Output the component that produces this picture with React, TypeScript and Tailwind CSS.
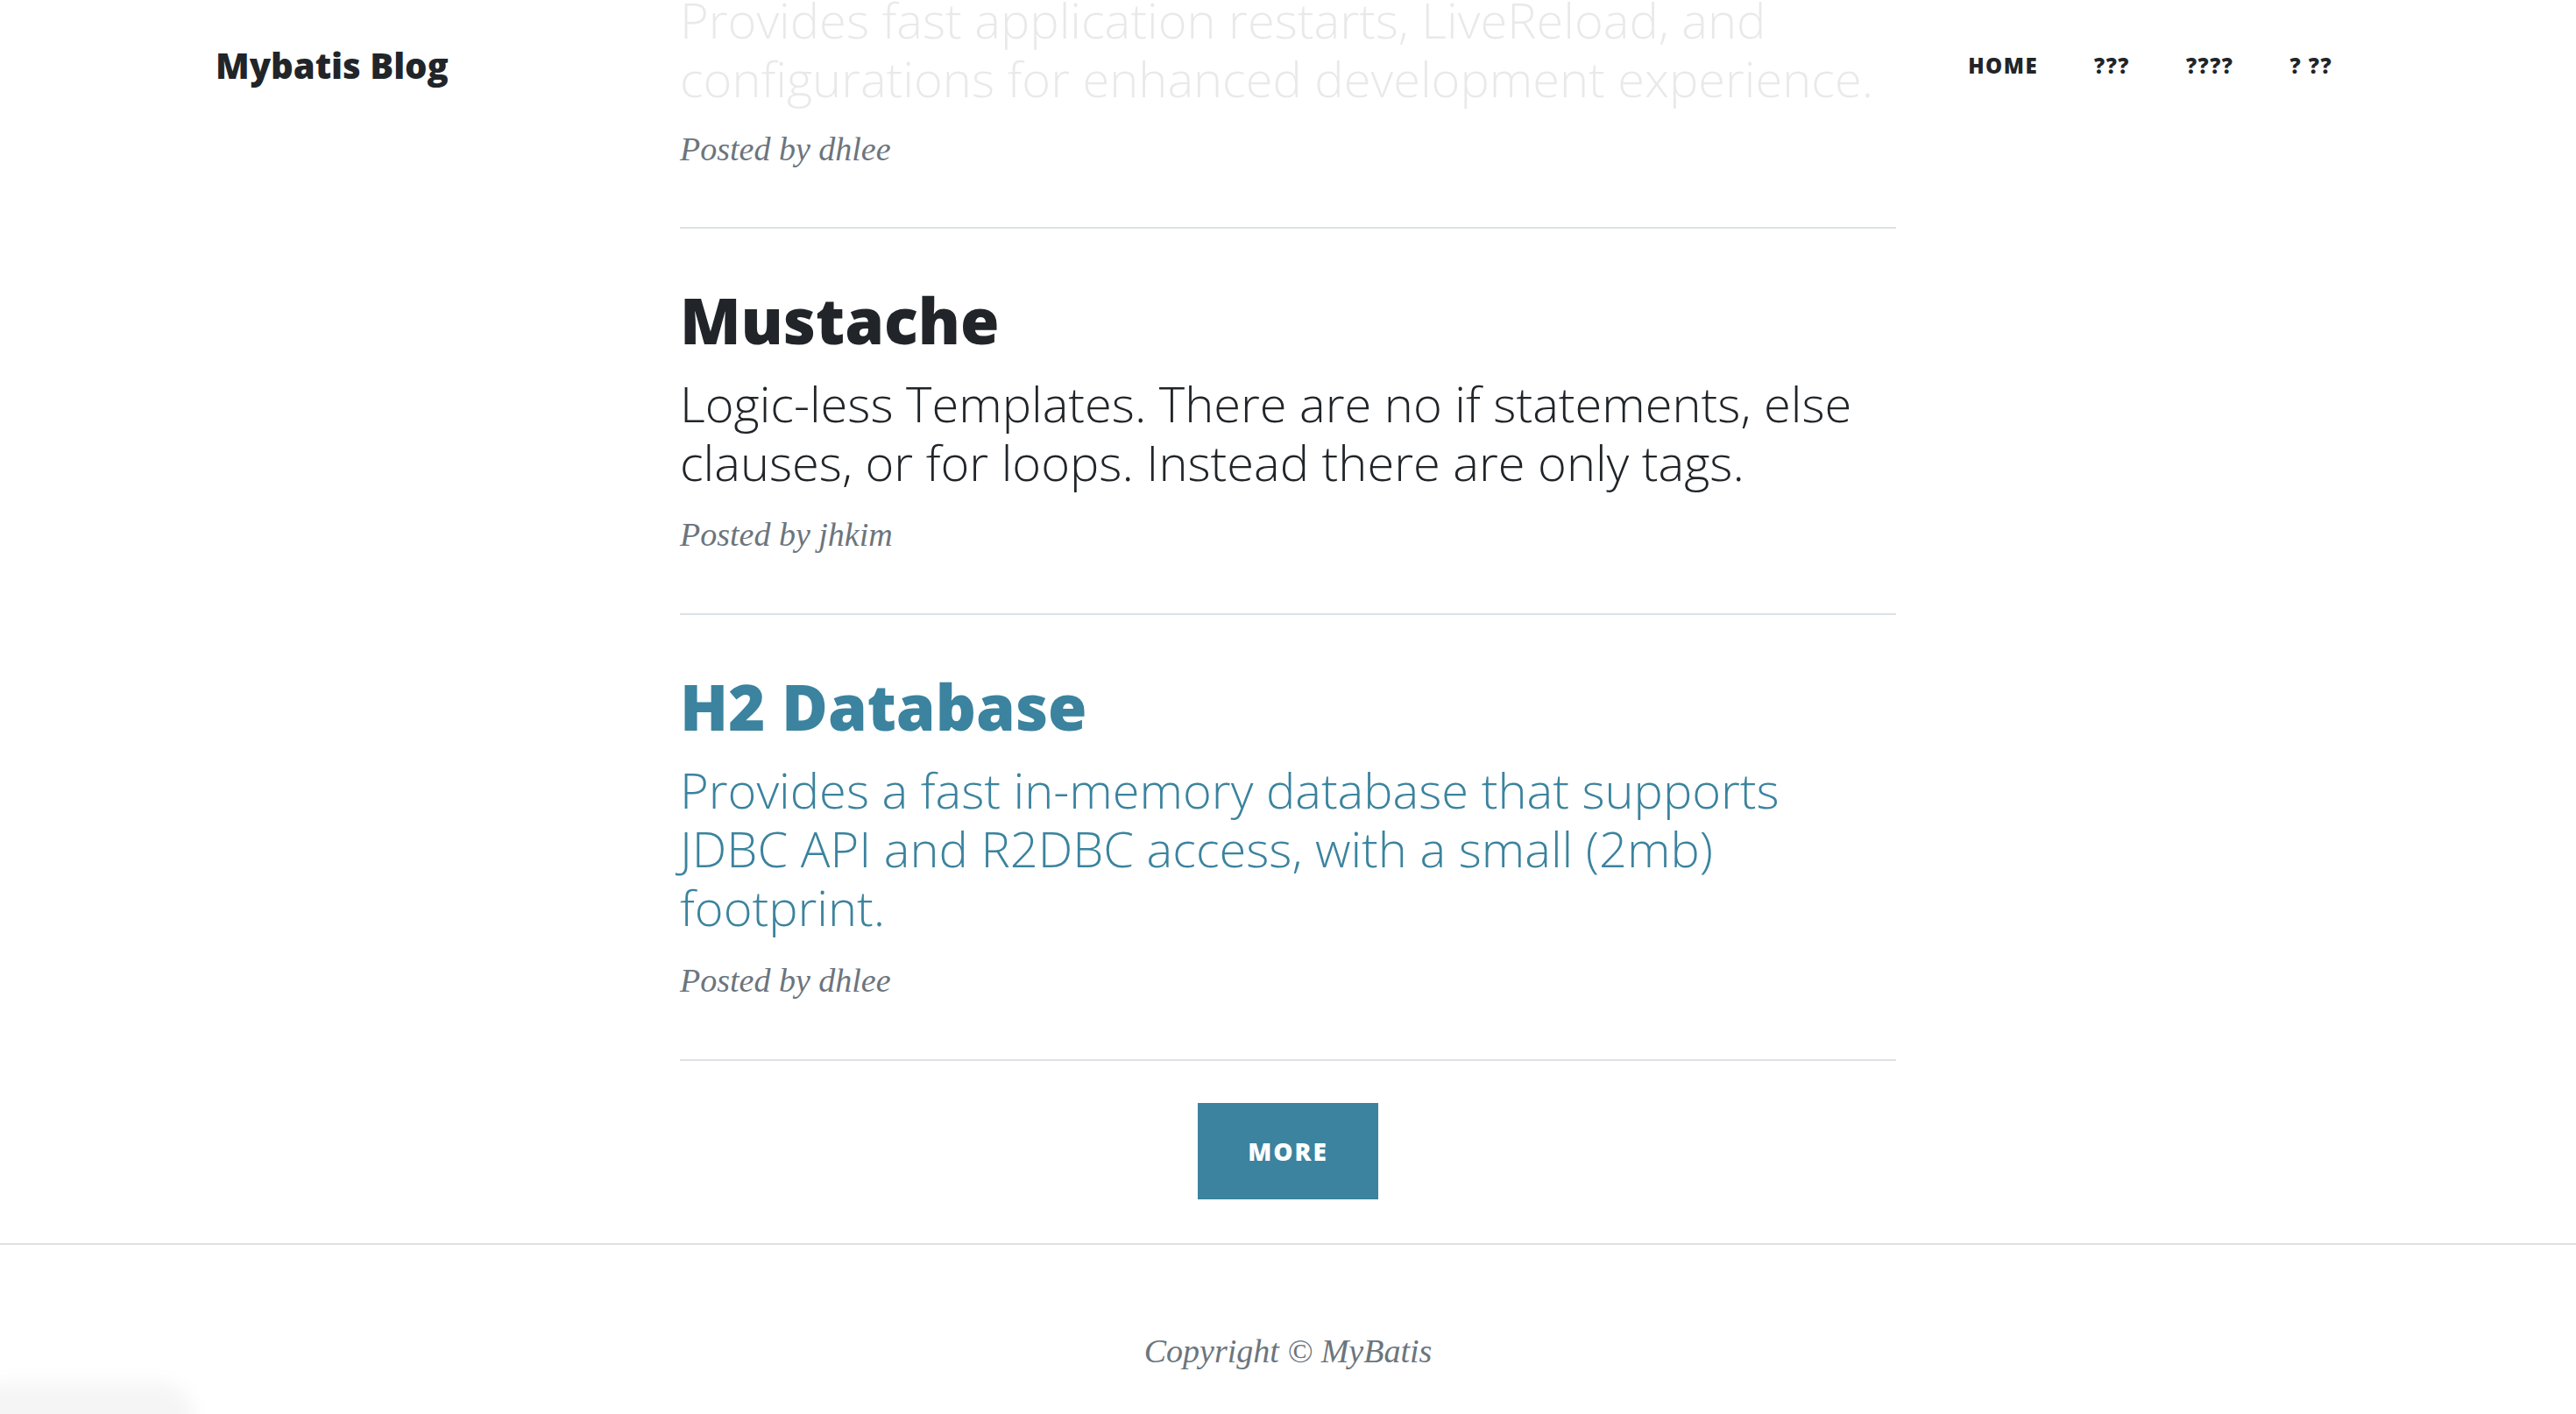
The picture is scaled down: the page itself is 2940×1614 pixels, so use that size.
import React from "react";

const navItems = ["Home", "???", "????", "? ??"];

function Meta({ author, className }: { author: string; className: string }) {
  return (
    <p className={`font-['Liberation_Serif',serif] text-[38px] italic leading-[54px] text-[#6c757d] ${className}`}>
      Posted by {author}
    </p>
  );
}

function Rule({ className }: { className: string }) {
  return <hr className={`border-0 border-t-2 border-[#dee2e6] ${className}`} />;
}

export default function App() {
  return (
    <div className="relative h-[1614px] w-full overflow-hidden bg-white font-['Open_Sans',sans-serif] text-[#212529]">
      <nav className="absolute inset-x-0 top-0 z-10 h-[156px] bg-white/90">
        <div className="flex h-[150px] items-center justify-between px-[246px]">
          <a className="text-[40px] font-extrabold leading-none text-[#212529]">Mybatis Blog</a>
          <ul className="flex">
            {navItems.map((item) => (
              <li
                key={item}
                className="px-[32px] text-[24px] font-extrabold uppercase leading-none tracking-[1.5px] text-[#212529]"
              >
                {item}
              </li>
            ))}
          </ul>
        </div>
      </nav>

      <main className="mx-auto w-[1388px]">
        <div className="-mt-[11px]">
          <p className="text-[56px] font-light leading-[67.2px]">
            Provides fast application restarts, LiveReload, and configurations for enhanced development experience.
          </p>
          <Meta author="dhlee" className="mt-[20px]" />
        </div>
        <Rule className="mt-[62px]" />

        <div>
          <h2 className="mt-[61px] text-[72px] font-extrabold leading-[86.4px]">Mustache</h2>
          <p className="mt-[18px] text-[56px] font-light leading-[67.2px]">
            Logic-less Templates. There are no if statements, else clauses, or for loops. Instead there are only tags.
          </p>
          <Meta author="jhkim" className="mt-[22px]" />
        </div>
        <Rule className="mt-[63px]" />

        <div className="text-[#3b839e]">
          <h2 className="mt-[61px] text-[72px] font-extrabold leading-[86.4px]">H2 Database</h2>
          <p className="mt-[18px] text-[56px] font-light leading-[67.2px]">
            Provides a fast in-memory database that supports JDBC API and R2DBC access, with a small (2mb) footprint.
          </p>
          <Meta author="dhlee" className="mt-[23px]" />
        </div>
        <Rule className="mt-[63px]" />

        <div className="mt-[48px] flex justify-center">
          <button className="flex h-[110px] w-[206px] items-center justify-center bg-[#3b839e] text-[28px] font-extrabold uppercase tracking-[2px] text-white">
            More
          </button>
        </div>
      </main>

      <footer className="mt-[50px] border-t-2 border-[#dee2e6] pt-[94px]">
        <p className="text-center font-['Liberation_Serif',serif] text-[38px] italic leading-[54px] text-[#6c757d]">
          Copyright © MyBatis
        </p>
      </footer>

      <div className="pointer-events-none absolute -bottom-[40px] -left-[30px] h-[76px] w-[250px] rounded-full bg-black/[0.04] blur-[10px]" />
    </div>
  );
}
